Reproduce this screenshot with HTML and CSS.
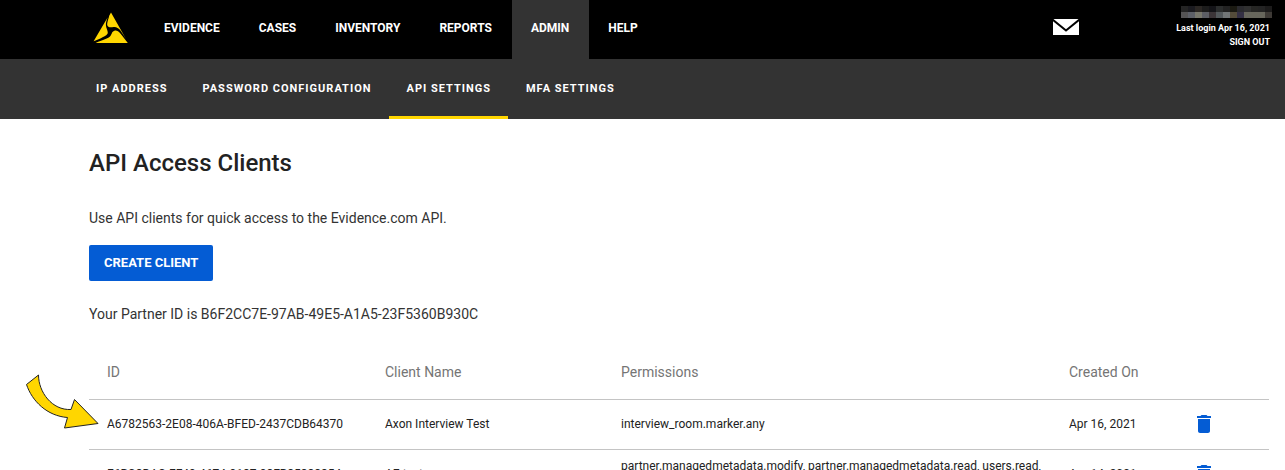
FILE: index.html
```html
<!DOCTYPE html>
<html lang="en">
<head>
    <meta charset="UTF-8">
    <title>API Access Clients</title>
    <link rel="stylesheet" href="styles.css">
</head>
<body>

<header class="topbar">
    <a class="logo" href="#" aria-label="Home">
        <svg width="36" height="32" viewBox="0 0 36 32">
            <path fill="#ffd600" d="M14.6 5.6 C13.8 8 12.8 10.6 12.9 13 C13 16 15 18.6 14.8 21 C14.5 23.8 6 27 0.6 29.3 Z"/>
            <path fill="#ffd600" d="M18 0.6 L33 27 C30.6 23.4 27.8 17.8 25 16.2 C23.4 15.2 22 14.8 20.6 15 C17.8 15.4 15.6 15.6 14.6 14 C13.4 12 15.4 7.6 16.2 3.8 Z"/>
            <path fill="#ffd600" d="M34.8 31 L2.6 31 C8 28.6 14 27.4 17 24.6 C19 22.4 18.6 19.6 21.4 18.8 C24.8 17.8 26.6 20.6 28.8 23.2 Z"/>
        </svg>
    </a>
    <nav class="main-nav">
        <a href="#">EVIDENCE</a>
        <a href="#">CASES</a>
        <a href="#">INVENTORY</a>
        <a href="#">REPORTS</a>
        <a href="#" class="active">ADMIN</a>
        <a href="#">HELP</a>
    </nav>
    <a class="mail" href="#" aria-label="Messages">
        <svg width="26" height="16" viewBox="0 0 26 16">
            <rect width="26" height="16" fill="#fff"/>
            <path d="M-0.5 0.5 L13 11.5 L26.5 0.5" fill="none" stroke="#000" stroke-width="2"/>
        </svg>
    </a>
    <div class="user">
        <svg class="user-name" width="91" height="12" viewBox="0 0 91 12" shape-rendering="crispEdges">
            <rect x="0" width="7" height="6" fill="#242424"/>
            <rect x="7" width="7" height="6" fill="#1b1b20"/>
            <rect x="14" width="7" height="6" fill="#2b2724"/>
            <rect x="21" width="7" height="6" fill="#1c1c1c"/>
            <rect x="28" width="7" height="6" fill="#141418"/>
            <rect x="35" width="7" height="6" fill="#2b2d2d"/>
            <rect x="42" width="7" height="6" fill="#222222"/>
            <rect x="49" width="7" height="6" fill="#1b1a12"/>
            <rect x="56" width="7" height="6" fill="#2a2a2e"/>
            <rect x="63" width="7" height="6" fill="#303030"/>
            <rect x="70" width="7" height="6" fill="#262624"/>
            <rect x="77" width="7" height="6" fill="#242424"/>
            <rect x="84" width="7" height="6" fill="#1c1b1b"/>
            <rect x="0" y="6" width="7" height="6" fill="#555455"/>
            <rect x="7" y="6" width="7" height="6" fill="#5d6068"/>
            <rect x="14" y="6" width="7" height="6" fill="#77776c"/>
            <rect x="21" y="6" width="7" height="6" fill="#5c5e65"/>
            <rect x="28" y="6" width="7" height="6" fill="#3c3538"/>
            <rect x="35" y="6" width="7" height="6" fill="#53585b"/>
            <rect x="42" y="6" width="7" height="6" fill="#717576"/>
            <rect x="49" y="6" width="7" height="6" fill="#544c3a"/>
            <rect x="56" y="6" width="7" height="6" fill="#343044"/>
            <rect x="63" y="6" width="21" height="6" fill="#67665c"/>
            <rect x="84" y="6" width="7" height="6" fill="#3e3a36"/>
        </svg>
        <span>Last login Apr 16, 2021</span>
        <a href="#">SIGN OUT</a>
    </div>
</header>

<nav class="sub-nav">
    <a href="#">IP ADDRESS</a>
    <a href="#">PASSWORD CONFIGURATION</a>
    <a href="#" class="active">API SETTINGS</a>
    <a href="#">MFA SETTINGS</a>
</nav>

<main class="content">
    <h1>API Access Clients</h1>
    <p>Use API clients for quick access to the Evidence.com API.</p>
    <button class="create" type="button">CREATE CLIENT</button>
    <p>Your Partner ID is B6F2CC7E-97AB-49E5-A1A5-23F5360B930C</p>

    <div class="table-wrap">
        <table class="clients">
            <thead>
                <tr>
                    <th class="col-id">ID</th>
                    <th class="col-name">Client Name</th>
                    <th class="col-permissions">Permissions</th>
                    <th class="col-created">Created On</th>
                    <th class="col-delete"></th>
                </tr>
            </thead>
            <tbody>
                <tr>
                    <td>A6782563-2E08-406A-BFED-2437CDB64370</td>
                    <td>Axon Interview Test</td>
                    <td>interview_room.marker.any</td>
                    <td>Apr 16, 2021</td>
                    <td>
                        <button class="delete" type="button" aria-label="Delete">
                            <svg width="14" height="18" viewBox="0 0 14 18">
                                <path fill="#045cd4" d="M1 16 C1 17.1 1.9 18 3 18 H11 C12.1 18 13 17.1 13 16 V4 H1 Z M14 1 H10.5 L9.5 0 H4.5 L3.5 1 H0 V3 H14 Z"/>
                            </svg>
                        </button>
                    </td>
                </tr>
                <tr>
                    <td>F6BC8DAC-FF49-4674-9187-98FB85388354</td>
                    <td>AE test</td>
                    <td>partner.managedmetadata.modify, partner.managedmetadata.read, users.read, users.modify</td>
                    <td>Apr 14, 2021</td>
                    <td>
                        <button class="delete" type="button" aria-label="Delete">
                            <svg width="14" height="18" viewBox="0 0 14 18">
                                <path fill="#045cd4" d="M1 16 C1 17.1 1.9 18 3 18 H11 C12.1 18 13 17.1 13 16 V4 H1 Z M14 1 H10.5 L9.5 0 H4.5 L3.5 1 H0 V3 H14 Z"/>
                            </svg>
                        </button>
                    </td>
                </tr>
            </tbody>
        </table>
        <svg class="arrow" width="74" height="56" viewBox="0 0 74 56">
            <path fill="#ffd600" stroke="#222" stroke-width="1" stroke-linejoin="round" d="M1.5 10.5 L13.5 1 C13.5 18 27 36.5 46 35.5 L49.5 25.5 L73 49.5 L39.5 54 L42.5 43.5 C22 42 7 27 1.5 10.5 Z"/>
        </svg>
    </div>
</main>

</body>
</html>
```

FILE: styles.css
```css
* {
    box-sizing: border-box;
    margin: 0;
    padding: 0;
}

body {
    font-family: Roboto, "Liberation Sans", sans-serif;
    font-size: 14px;
    color: #222;
    background-color: #fff;
}

a {
    color: #fff;
    text-decoration: none;
}

svg {
    display: block;
}

/* header */
.topbar {
    display: flex;
    height: 59px;
    padding-right: 15px;
    padding-left: 93px;
    background-color: #000;
    color: #fff;
}

.logo {
    margin-top: 12px;
    margin-right: 16px;
}

.main-nav {
    display: flex;
    flex: 1;
}

.main-nav a {
    padding: 20px 20px 20px 19px;
    font-size: 12px;
    font-weight: 700;
    line-height: 16px;
}

.main-nav .active {
    background-color: #333;
}

.mail {
    margin-top: 19px;
    margin-right: 97px;
}

.user {
    display: flex;
    flex-direction: column;
    align-items: flex-end;
    padding-top: 6px;
    font-size: 9px;
    font-weight: 700;
    line-height: 14px;
    white-space: nowrap;
}

.user-name {
    margin-right: -2px;
    margin-bottom: 3px;
}

.sub-nav {
    display: flex;
    height: 60px;
    padding-left: 78px;
    background-color: #333;
}

.sub-nav a {
    padding: 22px 17px 19px 18px;
    font-size: 11px;
    font-weight: 700;
    line-height: 16px;
    letter-spacing: 1px;
}

.sub-nav .active {
    border-bottom: 3px solid #ffd600;
}

/* page content */
.content {
    padding: 28px 16px 28px 89px;
}

h1 {
    margin-bottom: 29px;
    font-size: 24px;
    font-weight: 500;
    line-height: 32px;
}

p {
    line-height: 20px;
    color: #333;
}

.create {
    display: block;
    height: 36px;
    margin: 17px 0 23px;
    padding: 0 15px 2px;
    border: none;
    border-radius: 2px;
    background-color: #045cd4;
    color: #fff;
    font-family: inherit;
    font-size: 13px;
    font-weight: 700;
    cursor: pointer;
}

.table-wrap {
    position: relative;
    margin-top: 20px;
}

.clients {
    width: 100%;
    table-layout: fixed;
    border-collapse: collapse;
}

.clients th {
    height: 55px;
    padding-top: 2px;
    padding-left: 18px;
    border-bottom: 1px solid #c4c4c4;
    color: #757575;
    font-weight: 400;
    text-align: left;
}

.clients td {
    height: 50px;
    padding-left: 18px;
    border-bottom: 1px solid #c4c4c4;
    font-size: 12px;
    line-height: 16px;
}

.col-id {
    width: 278px;
}

.col-name {
    width: 236px;
}

.col-created {
    width: 128px;
}

.col-delete {
    width: 90px;
}

.delete {
    display: block;
    border: none;
    background: none;
    cursor: pointer;
}

.arrow {
    position: absolute;
    top: 30px;
    left: -64px;
}
```
